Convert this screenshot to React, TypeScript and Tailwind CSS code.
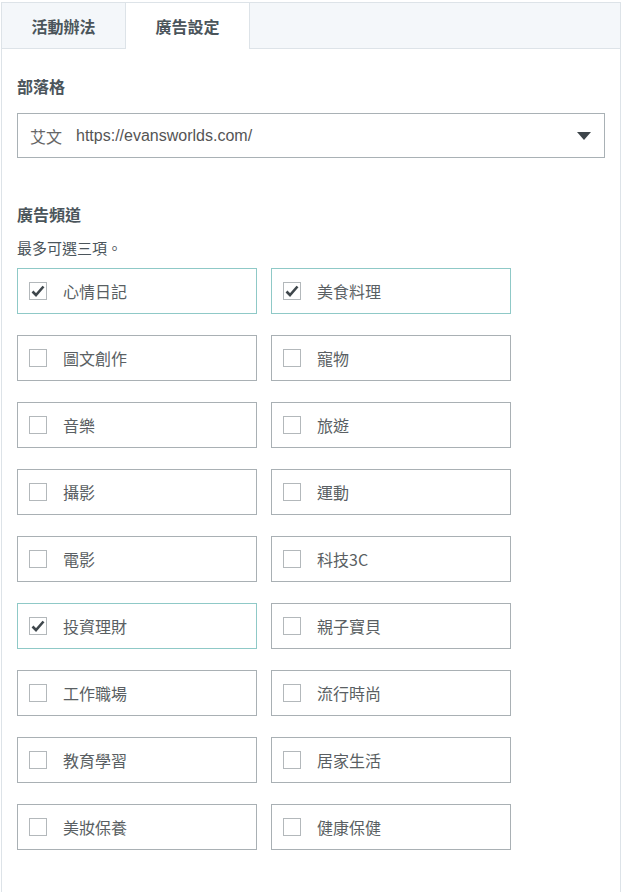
import React from "react";

const items: [string, boolean][] = [
  ["心情日記", true],
  ["美食料理", true],
  ["圖文創作", false],
  ["寵物", false],
  ["音樂", false],
  ["旅遊", false],
  ["攝影", false],
  ["運動", false],
  ["電影", false],
  ["科技3C", false],
  ["投資理財", true],
  ["親子寶貝", false],
  ["工作職場", false],
  ["流行時尚", false],
  ["教育學習", false],
  ["居家生活", false],
  ["美妝保養", false],
  ["健康保健", false],
];

const font = { fontFamily: '"Noto Sans CJK TC", "Noto Sans", sans-serif' };

export default function App() {
  return (
    <div className="w-[622px] h-[892px] bg-white pt-[2px] pl-[1px]" style={font}>
      <div className="w-[620px] h-[890px] border-l border-r border-t border-[#dde3e8]">
        <div className="flex h-[46px] bg-[#f4f7fa]">
          <div className="w-[124px] flex items-center justify-center border-b border-r border-[#dde3e8] text-[16px] font-bold text-[#4b555b]">
            活動辦法
          </div>
          <div className="w-[124px] flex items-center justify-center bg-white border-r border-[#dde3e8] text-[16px] font-bold text-[#4b555b]">
            廣告設定
          </div>
          <div className="flex-1 border-b border-[#dde3e8]" />
        </div>
        <div className="pl-[15px] pt-[24px]">
          <div className="text-[16px] font-bold text-[#4b555b] leading-[26px]">部落格</div>
          <div className="mt-[14px] w-[588px] h-[45px] border border-[#a9b1b5] flex items-center pl-[12px] pr-[12px] text-[16px] text-[#555]">
            <span className="text-[#666]">艾文</span>
            <span className="ml-[14px]" style={{ fontFamily: '"Liberation Sans", Arial, sans-serif' }}>
              https://evansworlds.com/
            </span>
            <svg className="ml-auto" width="16" height="10" viewBox="0 0 16 10">
              <path d="M1 1 L15 1 L8 9 Z" fill="#3d454a" />
            </svg>
          </div>
          <div className="mt-[43px] text-[16px] font-bold text-[#4b555b] leading-[26px]">廣告頻道</div>
          <div className="mt-[11px] text-[15px] text-[#4b555b] leading-[20px]">最多可選三項。</div>
          <div className="mt-[10px] grid grid-cols-[240px_240px] gap-x-[14px] gap-y-[21px]">
            {items.map(([label, checked]) => (
              <div
                key={label}
                className={`h-[46px] flex items-center pl-[11px] border ${checked ? "border-[#8fc9c7]" : "border-[#a9b0b4]"}`}
              >
                <div className="w-[18px] h-[18px] border border-[#b3b8bb] flex items-center justify-center bg-white">
                  {checked && (
                    <svg width="14" height="12" viewBox="0 0 14 12">
                      <path d="M1.5 6.5 L5 10 L12.5 1.5" fill="none" stroke="#3f474c" strokeWidth="2.6" />
                    </svg>
                  )}
                </div>
                <span className="ml-[16px] text-[16px] text-[#5a5f63]">{label}</span>
              </div>
            ))}
          </div>
        </div>
      </div>
    </div>
  );
}
